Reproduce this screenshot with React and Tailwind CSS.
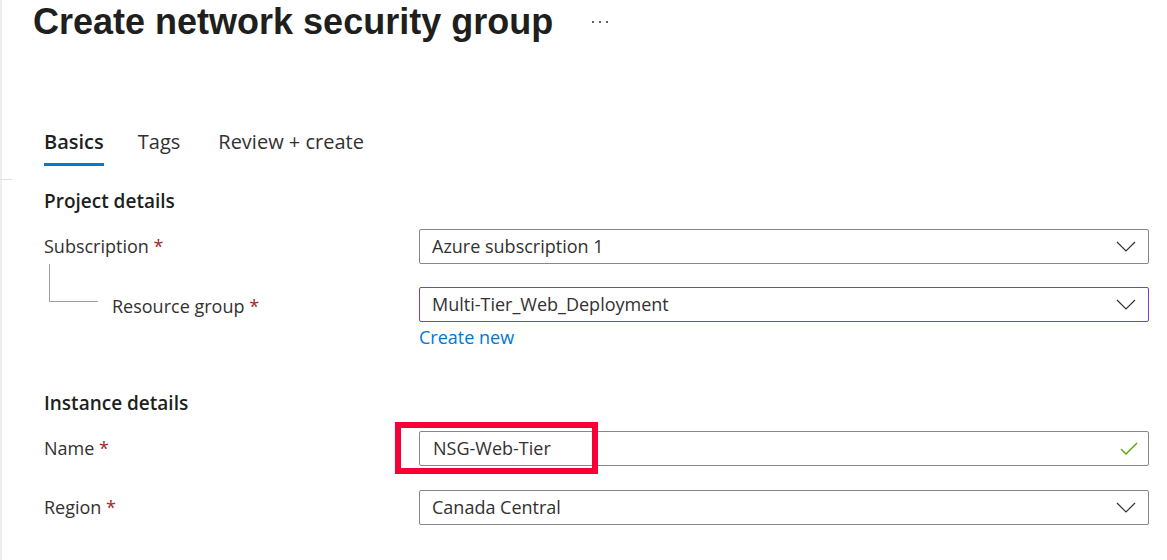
import React from "react";

function Chevron() {
  return (
    <svg width="20" height="11" viewBox="0 0 20 11" className="shrink-0">
      <path d="M1 1 L10 10 L19 1" fill="none" stroke="#323130" strokeWidth="1.2" />
    </svg>
  );
}

function Check() {
  return (
    <svg width="18" height="13" viewBox="0 0 18 13" className="shrink-0">
      <path d="M1 7 L6 12 L17 1" fill="none" stroke="#57a300" strokeWidth="1.3" />
    </svg>
  );
}

function Label({ children, className = "" }) {
  return (
    <div className={"text-[18px] text-[#323130] " + className}>
      {children} <span className="text-[#a4262c]">*</span>
    </div>
  );
}

function Dropdown({ value, purple }) {
  return (
    <div
      className={
        "flex-1 h-[35px] flex items-center justify-between pl-[12px] pr-[12px] rounded-[2px] border bg-white " +
        (purple ? "border-[#8a3ab9]" : "border-[#8a8886]")
      }
    >
      <span className="text-[18px] text-[#323130]">{value}</span>
      <Chevron />
    </div>
  );
}

export default function App() {
  return (
    <div
      className="min-h-screen flex bg-white"
      style={{ fontFamily: "'Open Sans', 'Noto Sans', sans-serif" }}
    >
      {/* left rail */}
      <div className="w-[2px] bg-[#eeeeee] relative">
        <div className="absolute left-0 top-[179px] w-[12px] h-px bg-[#e1e1e1]" />
      </div>

      <div className="flex-1">
        {/* Header */}
        <div className="flex items-center h-[44px] pl-[31px]">
          <h1
            className="text-[36px] font-bold text-[#201f1e] leading-none"
            style={{ fontFamily: "'Liberation Sans', Arial, sans-serif" }}
          >
            Create network security group
          </h1>
          <svg width="18" height="4" viewBox="0 0 18 4" className="ml-[38px]">
            <circle cx="2" cy="2" r="1" fill="#323130" />
            <circle cx="9" cy="2" r="1" fill="#323130" />
            <circle cx="16" cy="2" r="1" fill="#323130" />
          </svg>
        </div>

        <div className="pl-[42px] pr-[18px]">
          {/* Tabs */}
          <div className="flex gap-[34px] mt-[83px]">
            <div className="flex flex-col">
              <span className="text-[20px] leading-[30px] text-[#201f1e] font-semibold">Basics</span>
              <span className="mt-[6px] h-[3px] bg-[#0078d4]" />
            </div>
            <span className="text-[20px] leading-[30px] text-[#323130]">Tags</span>
            <span className="text-[20px] leading-[30px] text-[#323130] ml-[4px]">Review + create</span>
          </div>

          {/* Project details */}
          <h2 className="mt-[22px] text-[19px] leading-[26px] font-semibold text-[#201f1e]">
            Project details
          </h2>

          <div className="mt-[15px] flex items-center">
            <Label className="w-[375px]">Subscription</Label>
            <Dropdown value="Azure subscription 1" />
          </div>

          <div className="flex">
            <div className="w-[375px] flex">
              <div className="ml-[5px] w-[49px] h-[38px] border-l border-b border-[#a19f9d]" />
              <div className="pt-[29px] ml-[14px]">
                <Label>Resource group</Label>
              </div>
            </div>
            <div className="flex-1 pt-[23px]">
              <div className="flex">
                <Dropdown value="Multi-Tier_Web_Deployment" purple />
              </div>
              <div className="mt-[3px] text-[18px] leading-[24px] text-[#0078d4]">Create new</div>
            </div>
          </div>

          {/* Instance details */}
          <h2 className="mt-[41px] text-[19px] leading-[26px] font-semibold text-[#201f1e]">
            Instance details
          </h2>

          <div className="mt-[15px] flex items-center">
            <Label className="w-[375px]">Name</Label>
            <div className="flex-1 relative">
              <div className="h-[35px] flex items-center justify-between pl-[13px] pr-[10px] rounded-[2px] border border-[#8a8886] bg-white">
                <span className="text-[18px] text-[#323130]">NSG-Web-Tier</span>
                <Check />
              </div>
              <div className="absolute left-[-24px] top-[-9px] w-[203px] h-[52px] border-[6px] border-[#f80036] pointer-events-none" />
            </div>
          </div>

          <div className="mt-[24px] flex items-center">
            <Label className="w-[375px]">Region</Label>
            <Dropdown value="Canada Central" />
          </div>
        </div>
      </div>
    </div>
  );
}
